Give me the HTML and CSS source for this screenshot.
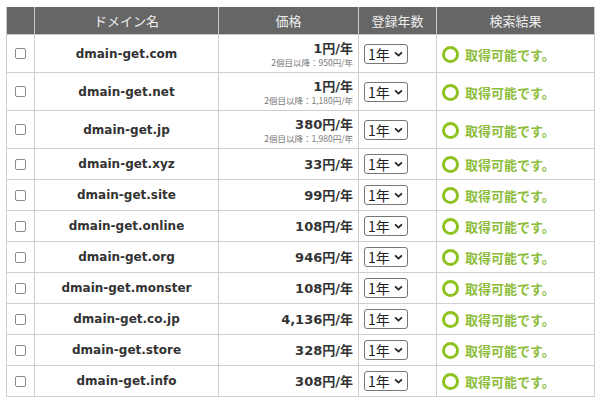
FILE: index.html
```html
<!DOCTYPE html>
<html lang="ja">
<head>
<meta charset="utf-8">
<title>ドメイン検索結果</title>
<link rel="stylesheet" href="styles.css">
</head>
<body>
<div class="wrap">
<table class="domains">
  <colgroup>
    <col class="c-check"><col class="c-name"><col class="c-price"><col class="c-year"><col class="c-result">
  </colgroup>
  <thead>
    <tr><th></th><th>ドメイン名</th><th>価格</th><th>登録年数</th><th>検索結果</th></tr>
  </thead>
  <tbody>
    <tr>
      <td class="check"><input type="checkbox" class="cb"></td>
      <td class="name">dmain-get.com</td>
      <td class="price"><div class="main">1円/年</div><div class="sub">2個目以降：950円/年</div></td>
      <td class="year"><span class="selbox"><select class="sel"><option>1年</option></select><svg class="chev" viewBox="0 0 10 6"><path d="M1.2 1.2 L5 4.8 L8.8 1.2"/></svg></span></td>
      <td class="result"><span class="ring"></span><span class="ok">取得可能です。</span></td>
    </tr>
    <tr>
      <td class="check"><input type="checkbox" class="cb"></td>
      <td class="name">dmain-get.net</td>
      <td class="price"><div class="main">1円/年</div><div class="sub">2個目以降：1,180円/年</div></td>
      <td class="year"><span class="selbox"><select class="sel"><option>1年</option></select><svg class="chev" viewBox="0 0 10 6"><path d="M1.2 1.2 L5 4.8 L8.8 1.2"/></svg></span></td>
      <td class="result"><span class="ring"></span><span class="ok">取得可能です。</span></td>
    </tr>
    <tr>
      <td class="check"><input type="checkbox" class="cb"></td>
      <td class="name">dmain-get.jp</td>
      <td class="price"><div class="main">380円/年</div><div class="sub">2個目以降：1,980円/年</div></td>
      <td class="year"><span class="selbox"><select class="sel"><option>1年</option></select><svg class="chev" viewBox="0 0 10 6"><path d="M1.2 1.2 L5 4.8 L8.8 1.2"/></svg></span></td>
      <td class="result"><span class="ring"></span><span class="ok">取得可能です。</span></td>
    </tr>
    <tr>
      <td class="check"><input type="checkbox" class="cb"></td>
      <td class="name">dmain-get.xyz</td>
      <td class="price"><div class="main">33円/年</div></td>
      <td class="year"><span class="selbox"><select class="sel"><option>1年</option></select><svg class="chev" viewBox="0 0 10 6"><path d="M1.2 1.2 L5 4.8 L8.8 1.2"/></svg></span></td>
      <td class="result"><span class="ring"></span><span class="ok">取得可能です。</span></td>
    </tr>
    <tr>
      <td class="check"><input type="checkbox" class="cb"></td>
      <td class="name">dmain-get.site</td>
      <td class="price"><div class="main">99円/年</div></td>
      <td class="year"><span class="selbox"><select class="sel"><option>1年</option></select><svg class="chev" viewBox="0 0 10 6"><path d="M1.2 1.2 L5 4.8 L8.8 1.2"/></svg></span></td>
      <td class="result"><span class="ring"></span><span class="ok">取得可能です。</span></td>
    </tr>
    <tr>
      <td class="check"><input type="checkbox" class="cb"></td>
      <td class="name">dmain-get.online</td>
      <td class="price"><div class="main">108円/年</div></td>
      <td class="year"><span class="selbox"><select class="sel"><option>1年</option></select><svg class="chev" viewBox="0 0 10 6"><path d="M1.2 1.2 L5 4.8 L8.8 1.2"/></svg></span></td>
      <td class="result"><span class="ring"></span><span class="ok">取得可能です。</span></td>
    </tr>
    <tr>
      <td class="check"><input type="checkbox" class="cb"></td>
      <td class="name">dmain-get.org</td>
      <td class="price"><div class="main">946円/年</div></td>
      <td class="year"><span class="selbox"><select class="sel"><option>1年</option></select><svg class="chev" viewBox="0 0 10 6"><path d="M1.2 1.2 L5 4.8 L8.8 1.2"/></svg></span></td>
      <td class="result"><span class="ring"></span><span class="ok">取得可能です。</span></td>
    </tr>
    <tr>
      <td class="check"><input type="checkbox" class="cb"></td>
      <td class="name">dmain-get.monster</td>
      <td class="price"><div class="main">108円/年</div></td>
      <td class="year"><span class="selbox"><select class="sel"><option>1年</option></select><svg class="chev" viewBox="0 0 10 6"><path d="M1.2 1.2 L5 4.8 L8.8 1.2"/></svg></span></td>
      <td class="result"><span class="ring"></span><span class="ok">取得可能です。</span></td>
    </tr>
    <tr>
      <td class="check"><input type="checkbox" class="cb"></td>
      <td class="name">dmain-get.co.jp</td>
      <td class="price"><div class="main">4,136円/年</div></td>
      <td class="year"><span class="selbox"><select class="sel"><option>1年</option></select><svg class="chev" viewBox="0 0 10 6"><path d="M1.2 1.2 L5 4.8 L8.8 1.2"/></svg></span></td>
      <td class="result"><span class="ring"></span><span class="ok">取得可能です。</span></td>
    </tr>
    <tr>
      <td class="check"><input type="checkbox" class="cb"></td>
      <td class="name">dmain-get.store</td>
      <td class="price"><div class="main">328円/年</div></td>
      <td class="year"><span class="selbox"><select class="sel"><option>1年</option></select><svg class="chev" viewBox="0 0 10 6"><path d="M1.2 1.2 L5 4.8 L8.8 1.2"/></svg></span></td>
      <td class="result"><span class="ring"></span><span class="ok">取得可能です。</span></td>
    </tr>
    <tr>
      <td class="check"><input type="checkbox" class="cb"></td>
      <td class="name">dmain-get.info</td>
      <td class="price"><div class="main">308円/年</div></td>
      <td class="year"><span class="selbox"><select class="sel"><option>1年</option></select><svg class="chev" viewBox="0 0 10 6"><path d="M1.2 1.2 L5 4.8 L8.8 1.2"/></svg></span></td>
      <td class="result"><span class="ring"></span><span class="ok">取得可能です。</span></td>
    </tr>
  </tbody>
</table>
</div>
</body>
</html>
```
FILE: styles.css
```css
html, body {
  margin: 0;
  padding: 0;
  background: #fff;
}
body {
  font-family: "DejaVu Sans", "Noto Sans CJK JP", sans-serif;
  color: #333;
}
.wrap {
  padding: 7px 6px 0 6px;
}
.domains {
  width: 588px;
  border-collapse: collapse;
  table-layout: fixed;
}
.c-check { width: 28px; }
.c-name { width: 184px; }
.c-price { width: 140px; }
.c-year { width: 78px; }
.c-result { width: 158px; }

.domains th {
  background: #666;
  color: #eee;
  font-family: "Noto Sans CJK JP", sans-serif;
  font-weight: normal;
  font-size: 13px;
  height: 27px;
  padding: 0;
  border: 1px solid #c8c8c8;
  border-top: none;
  text-align: center;
}
.domains th + th { border-left: 1px solid #bbb; }
.domains td {
  border: 1px solid #cfcfcf;
  padding: 5px 5px;
  height: 20px;
  vertical-align: middle;
}
.check { text-align: center; }
.cb {
  appearance: none;
  -webkit-appearance: none;
  width: 11px;
  height: 11px;
  border: 1px solid #8a8a8a;
  border-radius: 2px;
  background: #fff;
  display: block;
  margin: 0 auto;
}
.name {
  text-align: center;
  font-weight: bold;
  font-size: 12px;
  color: #333;
}
.price {
  text-align: right;
}
.price .main {
  font-weight: bold;
  font-size: 13px;
  line-height: 17px;
  color: #333;
}
.price .sub {
  font-family: "Noto Sans CJK JP", sans-serif;
  font-size: 8.5px;
  line-height: 10px;
  color: #777;
}
.year {
  padding-left: 5px;
}
.selbox {
  position: relative;
  display: block;
  width: 44px;
  height: 20px;
}
.sel {
  appearance: none;
  -webkit-appearance: none;
  font-family: "Noto Sans CJK JP", sans-serif;
  font-size: 14px;
  line-height: 18px;
  color: #222;
  height: 20px;
  width: 44px;
  margin: 0;
  padding: 0 0 0 3px;
  border: 1px solid #767676;
  border-radius: 3px;
  background: #fff;
  display: block;
}
.chev {
  position: absolute;
  right: 5px;
  top: 7px;
  width: 9px;
  height: 6px;
  pointer-events: none;
  fill: none;
  stroke: #222;
  stroke-width: 2;
}
.result {
  padding-left: 7px;
  white-space: nowrap;
}
.ring {
  display: inline-block;
  width: 11px;
  height: 11px;
  border: 3px solid #8dc21f;
  border-radius: 50%;
  vertical-align: middle;
  margin-right: 6px;
}
.ok {
  font-family: "Noto Sans CJK JP", sans-serif;
  font-size: 13px;
  font-weight: bold;
  color: #8cbd3a;
  vertical-align: middle;
}
```
